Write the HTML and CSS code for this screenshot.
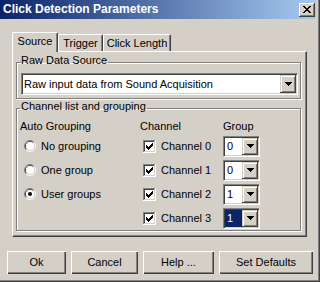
FILE: index.html
```html
<!DOCTYPE html>
<html lang="en">
<head>
<meta charset="utf-8">
<title>Click Detection Parameters</title>
<link rel="stylesheet" href="styles.css">
</head>
<body>
<svg class="defs" aria-hidden="true">
  <symbol id="arrow" viewBox="0 0 7 4"><path d="M0 0h7v1h-1v1h-1v1h-1v1h-1v-1h-1v-1h-1v-1h-1z"/></symbol>
  <symbol id="xmark" viewBox="0 0 8 7"><path d="M0 0h2v1h-2z M6 0h2v1h-2z M1 1h2v1h-2z M5 1h2v1h-2z M2 2h4v1h-4z M3 3h2v1h-2z M2 4h4v1h-4z M1 5h2v1h-2z M5 5h2v1h-2z M0 6h2v1h-2z M6 6h2v1h-2z"/></symbol>
  <symbol id="check" viewBox="0 0 13 13">
    <path fill="#808080" d="M0 0h12v1H1v11H0z"/>
    <path fill="#fff" d="M12 0h1v13H0v-1h12z"/>
    <path fill="#404040" d="M1 1h10v1H2v9H1z"/>
    <path fill="#d4d0c8" d="M11 1h1v11H1v-1h10z"/>
    <rect x="2" y="2" width="9" height="9" fill="#fff"/>
    <path fill="#000" d="M3 5H4V6H5V7H6V6H7V5H8V4H9V3H10V6H9V7H8V8H7V9H6V10H5V9H4V8H3Z"/>
  </symbol>
  <symbol id="radio" viewBox="0 0 12 12">
    <path d="M2.11 9.89A5.5 5.5 0 0 1 9.89 2.11" fill="none" stroke="#808080"/>
    <path d="M9.89 2.11A5.5 5.5 0 0 1 2.11 9.89" fill="none" stroke="#fff"/>
    <path d="M2.82 9.18A4.5 4.5 0 0 1 9.18 2.82" fill="none" stroke="#404040"/>
    <path d="M9.18 2.82A4.5 4.5 0 0 1 2.82 9.18" fill="none" stroke="#d4d0c8"/>
    <circle cx="6" cy="6" r="4" fill="#fff"/>
  </symbol>
</svg>

<div class="window">
  <div class="titlebar">
    <span class="title">Click Detection Parameters</span>
    <span class="close-btn"><svg class="xmark"><use href="#xmark"/></svg></span>
  </div>

  <div class="tabview">
    <div class="tabs">
      <div class="tab active tab-source">Source</div>
      <div class="tab tab-trigger">Trigger</div>
      <div class="tab tab-length">Click Length</div>
    </div>
    <div class="panel">
      <fieldset class="group group-source">
        <legend>Raw Data Source</legend>
        <div class="combo combo-wide">
          <span class="combo-text">Raw input data from Sound Acquisition</span>
          <span class="combo-btn"><svg class="arrow"><use href="#arrow"/></svg></span>
        </div>
      </fieldset>

      <fieldset class="group group-channels">
        <legend>Channel list and grouping</legend>
        <div class="grid">
          <div class="hdr">Auto Grouping</div>
          <div class="hdr hdr-channel">Channel</div>
          <div class="hdr">Group</div>

          <div class="opt"><svg class="radio"><use href="#radio"/></svg><span>No grouping</span></div>
          <div class="chk"><svg class="checkbox"><use href="#check"/></svg><span>Channel 0</span></div>
          <div class="cell"><div class="combo combo-small"><span class="combo-text">0</span><span class="combo-btn"><svg class="arrow"><use href="#arrow"/></svg></span></div></div>

          <div class="opt"><svg class="radio"><use href="#radio"/></svg><span>One group</span></div>
          <div class="chk"><svg class="checkbox"><use href="#check"/></svg><span>Channel 1</span></div>
          <div class="cell"><div class="combo combo-small"><span class="combo-text">0</span><span class="combo-btn"><svg class="arrow"><use href="#arrow"/></svg></span></div></div>

          <div class="opt"><svg class="radio"><use href="#radio"/><circle cx="6" cy="6" r="2" fill="#000"/></svg><span>User groups</span></div>
          <div class="chk"><svg class="checkbox"><use href="#check"/></svg><span>Channel 2</span></div>
          <div class="cell"><div class="combo combo-small"><span class="combo-text">1</span><span class="combo-btn"><svg class="arrow"><use href="#arrow"/></svg></span></div></div>

          <div class="opt"></div>
          <div class="chk"><svg class="checkbox"><use href="#check"/></svg><span>Channel 3</span></div>
          <div class="cell"><div class="combo combo-small"><span class="combo-text sel">1</span><span class="combo-btn"><svg class="arrow"><use href="#arrow"/></svg></span></div></div>
        </div>
      </fieldset>
    </div>
  </div>

  <div class="buttons">
    <button class="btn btn-ok">Ok</button>
    <button class="btn btn-cancel">Cancel</button>
    <button class="btn btn-help">Help ...</button>
    <button class="btn btn-defaults">Set Defaults</button>
  </div>
</div>
</body>
</html>
```

FILE: styles.css
```css
* { box-sizing: border-box; }
html, body { margin: 0; padding: 0; }
body {
  width: 320px;
  height: 282px;
  overflow: hidden;
  background: #d4d0c8;
  font-family: "Liberation Sans", Arial, sans-serif;
  font-size: 11px;
  line-height: 13px;
  color: #000;
}
.defs { display: block; width: 0; height: 0; overflow: hidden; }

.window {
  width: 320px;
  height: 282px;
  background: #d4d0c8;
  box-shadow: inset -1px -1px 0 #404040, inset -2px -2px 0 #808080;
}

.titlebar {
  width: 316px;
  height: 19px;
  display: flex;
  align-items: center;
  justify-content: space-between;
  padding: 0 1px 0 3px;
  background: linear-gradient(to right, #0a246a, #a6caf0);
}
.title { color: #fff; font-weight: bold; font-size: 12px; }
.close-btn {
  width: 16px;
  height: 14px;
  display: flex;
  align-items: center;
  justify-content: center;
  background: #d4d0c8;
  box-shadow: inset -1px -1px 0 #404040, inset 1px 1px 0 #fff, inset -2px -2px 0 #808080;
}
.xmark { width: 8px; height: 7px; display: block; shape-rendering: crispEdges; }

.tabview { margin: 13px 0 0 12px; }
.tabs { display: flex; align-items: flex-end; height: 19px; }
.tab {
  height: 17px;
  padding-top: 2px;
  text-align: center;
  background: #d4d0c8;
  border-top: 1px solid #fff;
  border-left: 1px solid #fff;
  border-right: 1px solid #404040;
  border-radius: 2px 2px 0 0;
  box-shadow: inset -1px 0 0 #808080;
}
.tab.active { height: 20px; margin-bottom: -1px; position: relative; z-index: 1; }
.tab-source { width: 46px; }
.tab-trigger { width: 45px; }
.tab-length { width: 68px; }

.panel {
  width: 295px;
  height: 186px;
  padding: 2px 5px 0 3px;
  border: 1px solid;
  border-color: #fff #404040 #404040 #fff;
  box-shadow: inset -1px -1px 0 #808080;
}

.group {
  margin: 0;
  min-width: 0;
  border: 1px solid #808080;
  box-shadow: inset 1px 1px 0 #fff, 1px 1px 0 #fff;
}
.group legend { padding: 0 1px 4px 0; line-height: 13px; }
.group-source { padding: 0 2px 3px 4px; }
.group-channels { margin-top: 1px; padding: 0 2px 0 3px; }
.group-channels legend { padding-left: 1px; }

.combo {
  display: flex;
  padding: 1px;
  background: #fff;
  border: 1px solid;
  border-color: #808080 #fff #fff #808080;
  box-shadow: inset 1px 1px 0 #404040, inset -1px -1px 0 #d4d0c8;
}
.combo-wide { height: 22px; margin-top: 2px; }
.combo-small { width: 37px; height: 21px; }
.combo-text { flex: 1; display: flex; align-items: center; padding-left: 1px; }
.combo-small .combo-text { padding-left: 2px; }
.combo-text.sel { background: #0a246a; color: #fff; }
.combo-btn {
  width: 16px;
  display: flex;
  align-items: center;
  justify-content: center;
  background: #d4d0c8;
  box-shadow: inset -1px -1px 0 #404040, inset 1px 1px 0 #d4d0c8, inset 2px 2px 0 #fff, inset -2px -2px 0 #808080;
}
.arrow { width: 7px; height: 4px; display: block; shape-rendering: crispEdges; }

.grid {
  display: grid;
  grid-template-columns: 120px 83px 1fr;
  grid-template-rows: 17px repeat(4, 24px);
}
.hdr { padding-top: 3px; }
.opt, .chk, .cell { display: flex; align-items: center; }
.opt { padding-left: 4px; gap: 5px; }
.chk { padding-left: 3px; gap: 5px; }
.radio { width: 12px; height: 12px; display: block; }
.checkbox { width: 13px; height: 13px; display: block; shape-rendering: crispEdges; }

.buttons { display: flex; gap: 5px; margin: 14px 0 0 7px; }
.btn {
  height: 23px;
  padding: 0;
  border: 0;
  background: #d4d0c8;
  font: inherit;
  color: #000;
  box-shadow: inset 1px 1px 0 #fff, inset -1px -1px 0 #404040, inset -2px -2px 0 #808080;
}
.btn-ok { width: 59px; }
.btn-cancel { width: 67px; }
.btn-help { width: 71px; }
.btn-defaults { width: 94px; }
```
